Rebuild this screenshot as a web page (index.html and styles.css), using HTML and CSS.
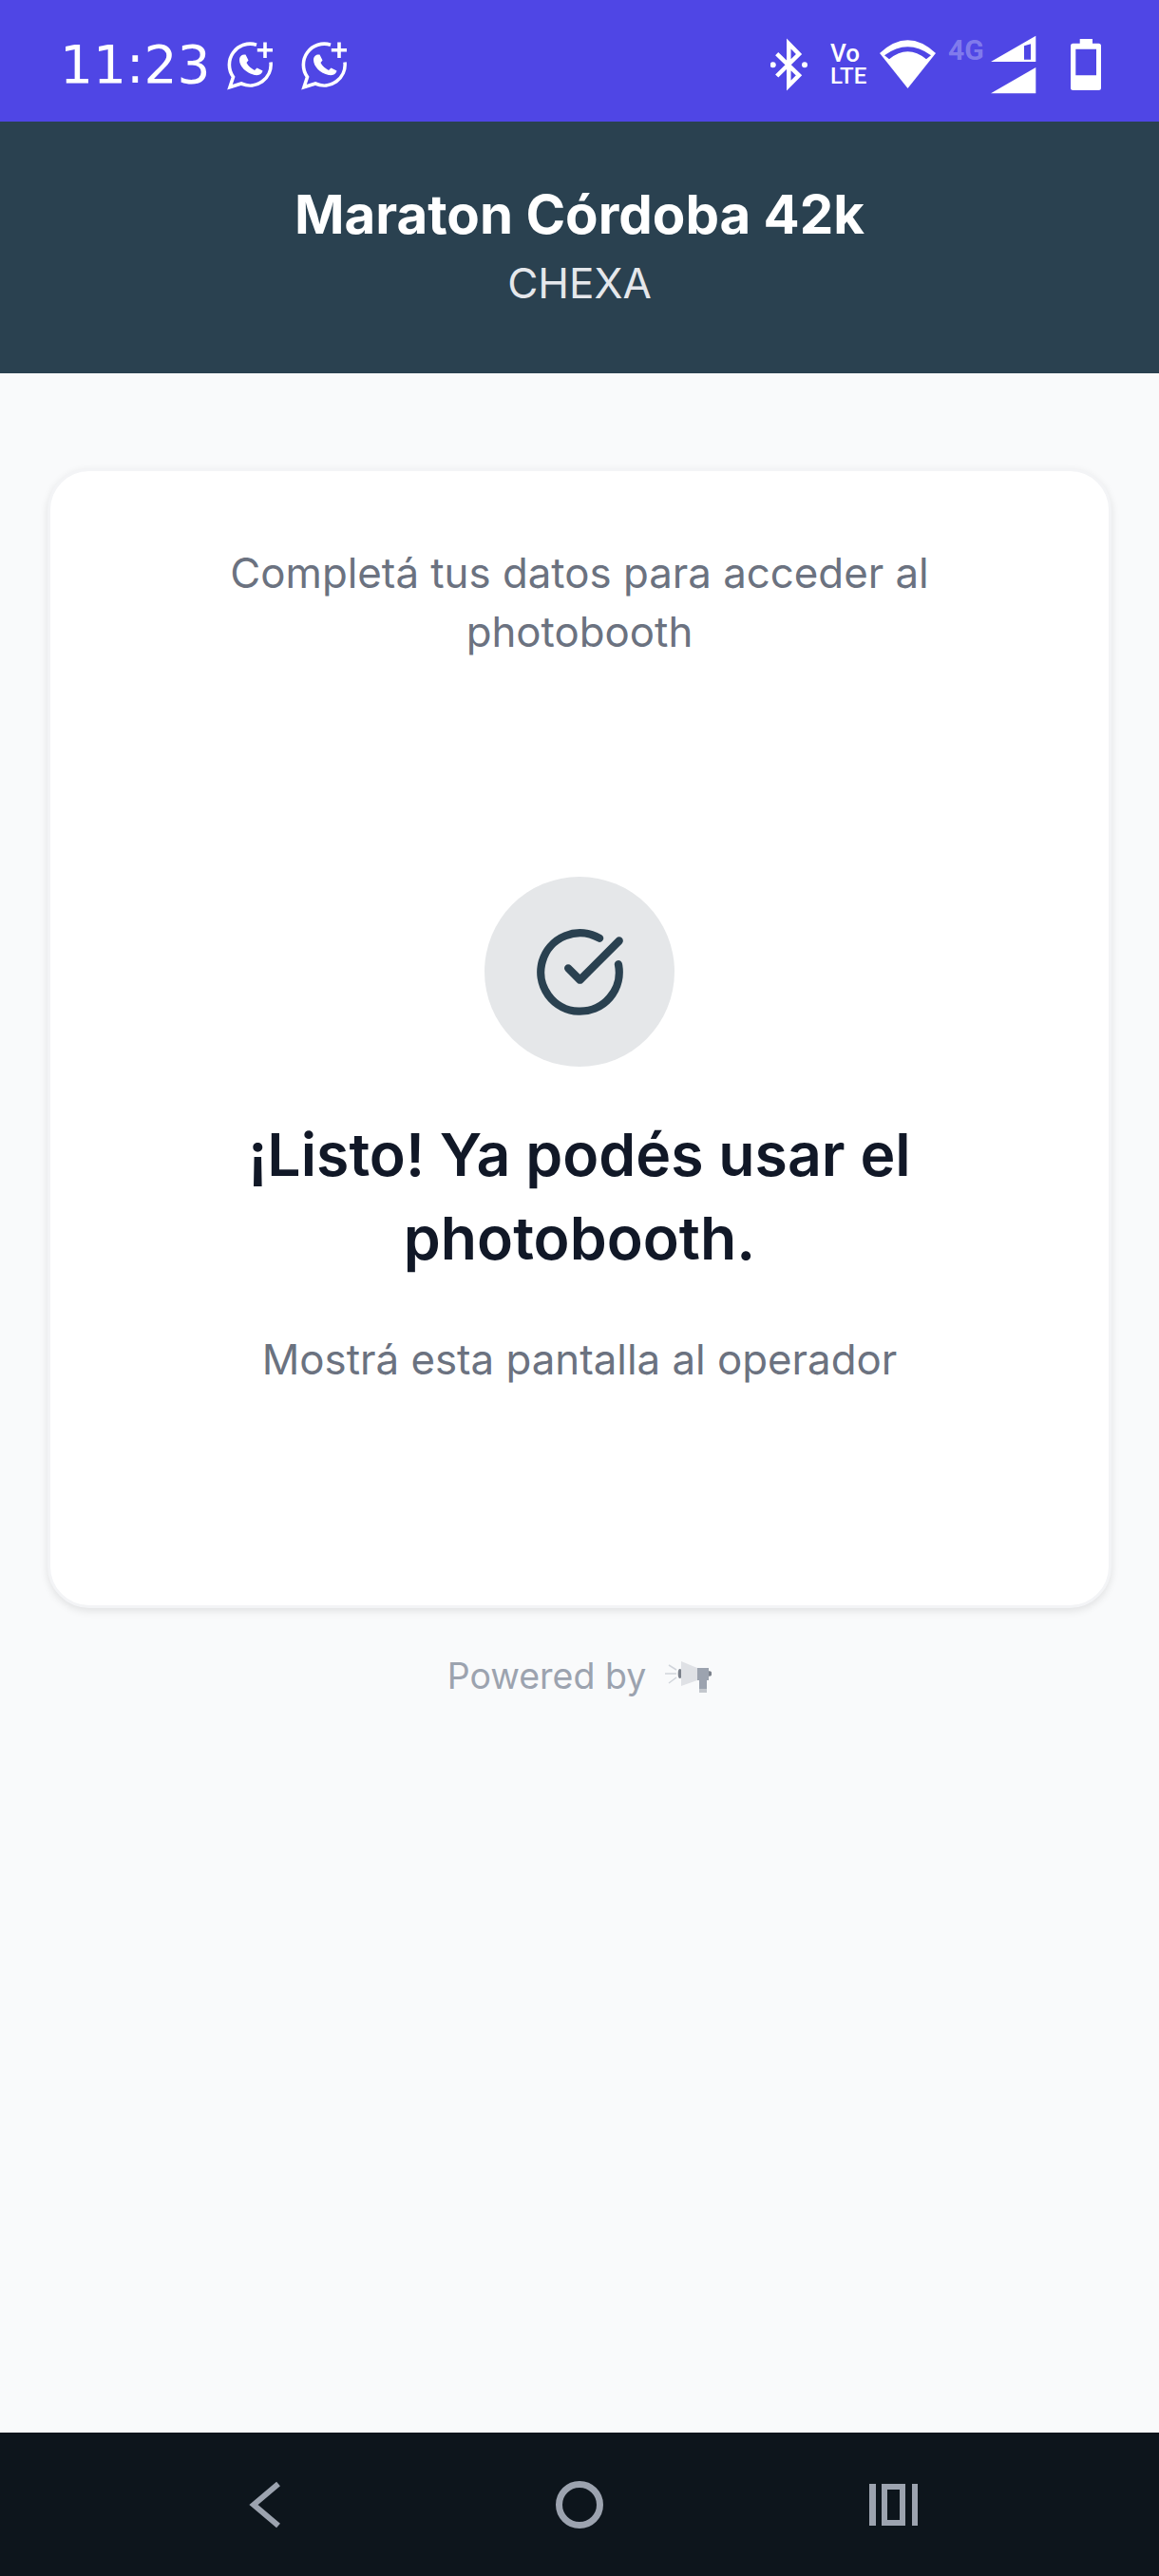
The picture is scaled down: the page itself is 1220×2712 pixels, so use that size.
FILE: index.html
```html
<html lang="es">
  <head>
    <meta charset="UTF-8" />
    <meta name="viewport" content="width=device-width, initial-scale=1.0" />
    <title>Maraton Córdoba 42k</title>
    <link rel="stylesheet" href="styles.css">
  </head>
  <body>
    <div class="status-bar">
      <span class="clock">11:23</span>
      <svg class="icon-wa first" viewBox="0 0 48 64">
        <path class="wa-ring" d="M31 11.2A22 22 0 0 0 6.5 45L3 55.7 15 52A22 22 0 0 0 46 29.5" />
        <path class="wa-plus" d="M40 8.5v16.4M31.8 16.7h16.2" />
        <path class="wa-phone" d="M13 27C13 24 15 21.5 18 21.5H19.5L22.5 27.5 20.5 30C22 33.5 26 36.5 29 38L31.5 35.5 37.5 38.5 37 40C35.5 43 32 43.5 29 43 20 41 13 34 13 27Z" />
      </svg>
      <svg class="icon-wa second" viewBox="0 0 48 64">
        <path class="wa-ring" d="M31 11.2A22 22 0 0 0 6.5 45L3 55.7 15 52A22 22 0 0 0 46 29.5" />
        <path class="wa-plus" d="M40 8.5v16.4M31.8 16.7h16.2" />
        <path class="wa-phone" d="M13 27C13 24 15 21.5 18 21.5H19.5L22.5 27.5 20.5 30C22 33.5 26 36.5 29 38L31.5 35.5 37.5 38.5 37 40C35.5 43 32 43.5 29 43 20 41 13 34 13 27Z" />
      </svg>
      <div class="status-right">
        <svg class="icon-bt" viewBox="0 0 40 64">
          <polyline points="6.7,20.7 30,43.3 19.3,54 19.3,10 30,21 6.7,44" />
          <circle cx="2.7" cy="32.3" r="3" />
          <circle cx="36" cy="32.3" r="3" />
        </svg>
        <svg class="icon-volte" viewBox="0 0 40 64">
          <text x="0" y="29" class="vo">Vo</text>
          <text x="0" y="51.7" class="lte">LTE</text>
        </svg>
        <svg class="icon-wifi" viewBox="0 0 61 64">
          <path class="solid" d="M1 20Q30.5 -7.4 60 20L30.5 57Z" />
          <path class="cut" d="M6 22.3Q30.5 4.3 55 22.3L50 26.3Q30.5 10.3 11 26.3Z" />
        </svg>
        <span class="net-type">4G</span>
        <svg class="icon-signal" viewBox="0 0 48 64">
          <path class="solid" fill-rule="evenodd" d="M0 29 47.3 1.7V29ZM35 12.3V26.7H42V10.3Z" />
          <path class="solid" d="M0 62.3 47.3 35V62.3Z" />
        </svg>
        <svg class="icon-battery" viewBox="0 0 32 64">
          <path class="solid" fill-rule="evenodd" d="M9.7 5H23V9.7H29.5Q32 9.7 32 12.2V56.5Q32 59 29.5 59H2.5Q0 59 0 56.5V12.2Q0 9.7 2.5 9.7H9.7ZM5.3 15.7V43.3H27V15.7Z" />
        </svg>
      </div>
    </div>

    <header class="event-header">
      <h1 class="event-title">Maraton Córdoba 42k</h1>
      <p class="event-org">CHEXA</p>
    </header>

    <main class="content">
      <section class="card">
        <p class="intro">Completá tus datos para acceder al photobooth</p>
        <div class="done">
          <div class="done-badge">
            <svg viewBox="0 0 24 24" class="done-icon">
              <path d="M21.801 10A10 10 0 1 1 17 3.335" />
              <path d="m9 11 3 3L22 4" />
            </svg>
          </div>
          <h2 class="done-title">¡Listo! Ya podés usar el photobooth.</h2>
          <p class="done-text">Mostrá esta pantalla al operador</p>
        </div>
      </section>
      <div class="powered">
        <span>Powered by</span>
        <svg class="powered-logo" viewBox="0 0 50 35">
          <path class="ray" d="M5 5 13 10M1 14H13M5 24 13 18" />
          <ellipse cx="16.7" cy="14" rx="2" ry="5" class="dark" />
          <path class="cone" d="M18 1 35 8V21L18 27Z" />
          <circle cx="47.5" cy="14" r="2.8" class="dark" />
          <rect x="35" y="8" width="12" height="13" class="body" />
          <rect x="37" y="21" width="8" height="9" class="body" />
          <rect x="37" y="30" width="8" height="4" class="foot" />
        </svg>
      </div>
    </main>

    <nav class="nav-bar">
      <svg class="nav-back" viewBox="0 0 36 50">
        <polyline points="31,3 5,25 31,47" />
      </svg>
      <div class="nav-home"></div>
      <div class="nav-recent">
        <span class="bar"></span>
        <span class="box"></span>
        <span class="bar"></span>
      </div>
    </nav>
  </body>
</html>
```

FILE: styles.css
```css
html,
body {
  height: 100%;
}
body {
  margin: 0;
  display: flex;
  flex-direction: column;
  background-color: #f9fafb;
  font-family: "Inter", "Noto Sans", sans-serif;
}
h1,
h2,
p {
  margin: 0;
}
svg {
  display: block;
  flex-shrink: 0;
}

/* phone status bar */
.status-bar {
  height: 128px;
  flex-shrink: 0;
  box-sizing: border-box;
  padding: 36px 61px 0 63px;
  display: flex;
  align-items: flex-start;
  background-color: #4f46e5;
  color: #fff;
}
.clock {
  width: 157px;
  margin-top: 2px;
  font-family: "DejaVu Sans", sans-serif;
  font-size: 55px;
  line-height: 60px;
  white-space: nowrap;
}
.status-bar svg {
  height: 64px;
}
.status-bar .solid {
  fill: #fff;
}
.status-bar .cut {
  fill: #4f46e5;
}
.icon-wa {
  width: 48px;
}
.icon-wa.first {
  margin-left: 19px;
}
.icon-wa.second {
  margin-left: 30px;
}
.wa-ring,
.wa-plus {
  fill: none;
  stroke: #fff;
  stroke-width: 3.6;
}
.wa-phone {
  fill: #fff;
}
.status-right {
  margin-left: auto;
  display: flex;
  align-items: flex-start;
}
.icon-bt {
  width: 40px;
}
.icon-bt polyline {
  fill: none;
  stroke: #fff;
  stroke-width: 4.5;
}
.icon-bt circle {
  fill: #fff;
}
.icon-volte {
  width: 40px;
  margin-left: 23px;
}
.icon-volte text {
  fill: #fff;
  font-family: "Roboto", sans-serif;
  font-weight: 500;
}
.vo {
  font-size: 26px;
}
.lte {
  font-size: 24px;
}
.icon-wifi {
  width: 61px;
  margin-left: 11px;
}
.net-type {
  width: 44px;
  margin: 2px 0 0 12px;
  color: rgba(255, 255, 255, 0.3);
  font-family: "Roboto", sans-serif;
  font-weight: 700;
  font-size: 30px;
  line-height: 30px;
}
.icon-signal {
  width: 48px;
  margin-left: 1px;
}
.icon-battery {
  width: 32px;
  margin-left: 36px;
}

.event-header {
  height: 265px;
  flex-shrink: 0;
  box-sizing: border-box;
  padding-top: 64.5px;
  text-align: center;
  background-color: #2a4150;
  color: #fff;
}
.event-title {
  font-size: 56.4px;
  line-height: 66px;
  font-weight: 700;
}
.event-org {
  margin-top: 9.5px;
  font-size: 44px;
  line-height: 60px;
  color: #e5e7eb;
}

.content {
  flex: 1;
  padding: 100px 50px 0;
}
.card {
  box-sizing: border-box;
  height: 1200px;
  padding: 77px 66px 0;
  text-align: center;
  background-color: #fff;
  border: 3px solid #f3f4f6;
  border-radius: 44px;
  box-shadow: 0 3px 8px rgba(0, 0, 0, 0.1);
}
.intro {
  font-size: 43.8px;
  line-height: 62px;
  color: #6b7280;
}
.done {
  margin-top: 226px;
  display: flex;
  flex-direction: column;
  align-items: center;
}
.done-badge {
  width: 200px;
  height: 200px;
  display: flex;
  justify-content: center;
  align-items: center;
  border-radius: 50%;
  background-color: #e5e7e9;
}
.done-icon {
  width: 99px;
  height: 99px;
  fill: none;
  stroke: #2a4150;
  stroke-width: 2;
  stroke-linecap: round;
  stroke-linejoin: round;
}
.done-title {
  margin-top: 48px;
  font-size: 62.5px;
  line-height: 88px;
  font-weight: 600;
  color: #111827;
}
.done-text {
  margin-top: 53.5px;
  font-size: 43.8px;
  line-height: 62px;
  color: #6b7280;
}

.powered {
  margin-top: 46px;
  display: flex;
  justify-content: center;
  align-items: center;
  gap: 19px;
  font-size: 37.5px;
  line-height: 52px;
  color: #9ca3af;
}
.powered-logo {
  width: 50px;
  height: 35px;
}
.powered-logo .ray {
  fill: none;
  stroke: #d1d5db;
  stroke-width: 1.5;
}
.powered-logo .dark {
  fill: #7c828c;
}
.powered-logo .cone {
  fill: #dfe1e5;
}
.powered-logo .body {
  fill: #9ca3af;
}
.powered-logo .foot {
  fill: #c3c7cd;
}

/* android navigation buttons */
.nav-bar {
  height: 151px;
  flex-shrink: 0;
  box-sizing: border-box;
  padding-left: 262px;
  display: flex;
  align-items: center;
  background-color: #0d151c;
}
.nav-back {
  width: 36px;
  height: 50px;
  fill: none;
  stroke: #9ca3af;
  stroke-width: 6;
}
.nav-home {
  margin-left: 287px;
  box-sizing: border-box;
  width: 50px;
  height: 50px;
  border: 7px solid #9ca3af;
  border-radius: 50%;
}
.nav-recent {
  margin-left: 280px;
  height: 44px;
  display: flex;
  gap: 6.5px;
}
.nav-recent .bar {
  width: 6.5px;
  background-color: #9ca3af;
}
.nav-recent .box {
  box-sizing: border-box;
  width: 25px;
  border: 6px solid #9ca3af;
}
```
